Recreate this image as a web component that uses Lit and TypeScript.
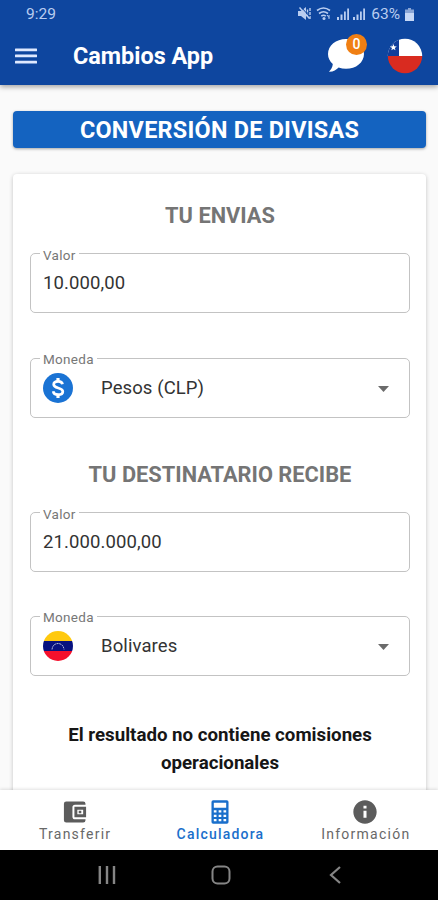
import { LitElement, html, css, svg } from "lit";
import { customElement, property } from "lit/decorators.js";
import { classMap } from "lit/directives/class-map.js";

const flagChile = html`<svg width="36" height="36" viewBox="0 0 36 36">
  <clipPath id="c"><circle cx="18" cy="18" r="17.2" /></clipPath>
  <g clip-path="url(#c)">
    <rect width="36" height="18" fill="#fff" />
    <rect width="12" height="18" fill="#103d9b" />
    <rect y="18" width="36" height="18" fill="#d92b20" />
  </g>
  <path fill="#fff" d="M6.400 6l.9 2.300 2.500.1-2 1.500.7 2.400-2.100-1.300-2.100 1.300.7-2.400-2-1.500 2.500-.1z" />
</svg>`;

const flagVenezuela = html`<svg width="30" height="30" viewBox="0 0 30 30">
  <clipPath id="v"><circle cx="15" cy="15" r="15" /></clipPath>
  <g clip-path="url(#v)">
    <rect width="30" height="10" fill="#ffc90e" />
    <rect y="10" width="30" height="10" fill="#07127f" />
    <rect y="20" width="30" height="10" fill="#f5102c" />
  </g>
  <path d="M9 18.500c.3-3.800 2.800-6 6-6s5.700 2.200 6 6" fill="none" stroke="#aab2d8" stroke-width="1" stroke-dasharray="2 .6" />
</svg>`;

const dollar = html`<svg width="30" height="30" viewBox="0 0 30 30">
  <circle cx="15" cy="15" r="15" fill="#1a73d4" />
  <path fill="none" stroke="#fff" stroke-width="2.700" d="M19.500 11.300c-.3-1.900-1.900-3-4.400-3-2.600 0-4.400 1.200-4.400 3.200 0 4.400 9.100 2.500 9.100 7 0 2-1.900 3.200-4.600 3.200-2.800 0-4.700-1.200-5-3.400" />
  <path fill="#fff" d="M13.400 5h3.200v3.300h-3.200zM13.400 21.600h3.200v3.300h-3.200z" />
</svg>`;

const navPaths = {
  wallet: svg`<path fill-rule="evenodd" d="M21 18.200V19a2 2 0 0 1-2 2H4.500a2 2 0 0 1-2-2V5a2 2 0 0 1 2-2H19a2 2 0 0 1 2 2v.8h-9a2.200 2.200 0 0 0-2.200 2.200v8a2.200 2.200 0 0 0 2.200 2.200zM11.500 16.500h10v-9h-10zM14 14V10h5v4zM15.200 11h2.200v2.100h-2.200z" />`,
  calculator: svg`<path fill-rule="evenodd" d="M6.200 2h11.600a1.500 1.500 0 0 1 1.500 1.500v17a1.500 1.500 0 0 1-1.500 1.500H6.200a1.500 1.500 0 0 1-1.500-1.500v-17A1.500 1.500 0 0 1 6.200 2zM6.700 4v4.300h10.600V4zM6.700 10.500v2h2.300v-2zm4.150 0v2h2.300v-2zm4.150 0v2h2.300v-2zM6.700 14.300v2h2.300v-2zm4.150 0v2h2.300v-2zm4.150 0v2h2.300v-2zM6.700 18v2h2.300v-2zm4.150 0v2h2.300v-2zm4.150 0v2h2.300v-2z" />`,
  info: svg`<path d="M12 2C6.480 2 2 6.480 2 12s4.480 10 10 10 10-4.480 10-10S17.520 2 12 2zm1.300 15h-2.600v-6h2.600v6zm0-8h-2.600V6.600h2.600V9z" />`,
};

@customElement("outlined-field")
export class OutlinedField extends LitElement {
  @property() label = "";
  @property() value = "";
  @property() currency = "";

  static styles = css`
    :host { display: block; }
    .box {
      position: relative;
      box-sizing: border-box;
      height: 60px;
      border: 1px solid #c3c3c3;
      border-radius: 5px;
      display: flex;
      align-items: center;
      padding: 0 20px 0 12px;
      font-size: 18.5px;
      letter-spacing: 0.1px;
      color: #333;
    }
    .label {
      position: absolute;
      left: 9px;
      top: -7px;
      padding: 0 3px;
      background: #fff;
      font-size: 13.5px;
      line-height: 16px;
      letter-spacing: 0.3px;
      color: #777;
    }
    .select .label { top: -8px; }
    .icon { display: flex; width: 58px; }
    .value { flex: 1; }
    .arrow { display: block; margin-top: 2px; }
  `;

  render() {
    const icon = this.currency === "clp" ? dollar : flagVenezuela;
    return html`<div class=${classMap({ box: true, select: !!this.currency })}>
      <span class="label">${this.label}</span>
      ${this.currency ? html`<span class="icon">${icon}</span>` : null}
      <span class="value">${this.value}</span>
      ${this.currency
        ? html`<svg class="arrow" width="11" height="6" viewBox="0 0 11 6"><path fill="#6b6b6b" d="M0 0h11L5.500 6z" /></svg>`
        : null}
    </div>`;
  }
}

@customElement("app-root")
export class AppRoot extends LitElement {
  static styles = css`
    :host {
      display: flex;
      flex-direction: column;
      height: 900px;
      overflow: hidden;
      background: #fafafa;
      font-family: Roboto, "Liberation Sans", sans-serif;
    }
    svg { display: block; }
    header {
      position: relative;
      z-index: 1;
      flex: none;
      height: 85px;
      background: #0e469f;
      color: #fff;
      box-shadow: 0 2px 5px rgba(0, 0, 0, 0.35);
    }
    .status {
      display: flex;
      align-items: center;
      gap: 5px;
      height: 28px;
      padding: 0 24px 0 26px;
      font-size: 15.5px;
      color: #b9cdf0;
    }
    .clock { flex: 1; }
    .bar { display: flex; align-items: center; height: 56px; padding: 0 15px; }
    .title { flex: 1; margin-left: 36px; font-size: 23.4px; font-weight: 700; }
    .chat { position: relative; margin-right: 23px; }
    .badge {
      position: absolute;
      left: 18px;
      top: -5px;
      width: 21px;
      height: 21px;
      border-radius: 50%;
      background: #f07f13;
      font-size: 14px;
      font-weight: 500;
      line-height: 21px;
      text-align: center;
    }
    main { flex: 1; min-height: 0; overflow: hidden; padding: 26px 12px 0 13px; }
    .banner {
      height: 37px;
      line-height: 38px;
      border-radius: 4px;
      background: #1463c0;
      box-shadow: 0 1px 3px rgba(0, 0, 0, 0.35);
      color: #fff;
      font-size: 23.4px;
      font-weight: 700;
      letter-spacing: 0.25px;
      text-align: center;
    }
    .card {
      box-sizing: border-box;
      margin-top: 26px;
      height: 640px;
      padding: 0 16px 0 17px;
      border-radius: 4px;
      background: #fff;
      box-shadow: 0 1px 4px rgba(0, 0, 0, 0.22);
    }
    h2 { margin: 0; font-size: 21.8px; font-weight: 700; color: #757575; text-align: center; line-height: 26px; }
    .send { padding: 29px 0 24px; }
    .receive { padding: 44px 0 24px; }
    .next { margin-top: 45px; }
    .next.last { margin-top: 44px; }
    .note { margin: 45px 0 0; padding: 0 30px; font-size: 18.7px; line-height: 28px; font-weight: 700; color: #161616; text-align: center; }
    nav {
      position: relative;
      flex: none;
      display: flex;
      height: 60px;
      box-sizing: border-box;
      padding-left: 2px;
      background: #fff;
      box-shadow: 0 -1px 3px rgba(0, 0, 0, 0.12);
    }
    .tab {
      flex: 1;
      display: flex;
      flex-direction: column;
      align-items: center;
      padding-top: 8px;
      color: #686868;
      font-size: 14px;
      line-height: 16px;
      letter-spacing: 1.25px;
    }
    .tab span { margin-right: -1px; }
    .tab svg { fill: #5c5c5c; }
    .active { color: #1a6fcb; font-weight: 500; letter-spacing: 1.2px; }
    .active svg { fill: #1a6fcb; }
    .system { flex: none; display: flex; justify-content: center; height: 50px; padding-left: 4px; background: #000; }
    .key { flex: 0 0 114px; display: flex; justify-content: center; align-items: center; }
  `;

  private tab(icon: keyof typeof navPaths, label: string, active = false) {
    return html`<div class=${classMap({ tab: true, active })}>
      <svg width="28" height="28" viewBox="0 0 24 24">${navPaths[icon]}</svg>
      <span>${label}</span>
    </div>`;
  }

  render() {
    return html`
      <header>
        <div class="status">
          <span class="clock">9:29</span>
          <svg width="68" height="16" viewBox="0 0 68 16" fill="#b9cdf0">
            <path d="M0 5h3l5-4v13l-5-4H0z" />
            <path d="M9.500 3.500v8M12 2v11.500" stroke="#b9cdf0" stroke-width="1.400" stroke-dasharray="3 1" fill="none" />
            <path d="M1.500 1.500l10 11" stroke="#b9cdf0" stroke-width="1.500" />
            <path d="M2.600 0.500l9 10" stroke="#0e469f" stroke-width="1" />
            <g fill="none" stroke="#b9cdf0" stroke-width="1.600">
              <path d="M19 4.500q6.500-5 13 0M21 7.500q4.500-3.500 9 0M23.300 10.200q2.200-1.800 4.500 0" />
            </g>
            <circle cx="26" cy="12.500" r="1.500" />
            <path d="M29 9l2 2.500M31 9v4" stroke="#b9cdf0" stroke-width="1" />
            <path d="M39 11h2v3h-2zM42.500 8.500h2V14h-2zM46 5.500h1.800V14H46zM49.200 2.500H51V14h-1.800zM55 11h2v3h-2zM58.500 8.500h2V14h-2zM62 5.500h1.800V14H62zM65.200 2.500H67V14h-1.800z" />
          </svg>
          <span>63%</span>
          <svg width="9" height="13" viewBox="0 0 9 13">
            <path fill="#89a5d6" d="M3 0h3v1.500h3V5H0V1.500h3z" /><path fill="#c6d8f6" d="M0 5h9v8H0z" />
          </svg>
        </div>
        <div class="bar">
          <svg width="22" height="16" viewBox="0 0 22 16" fill="#dfe9ff">
            <rect y="0.500" width="22" height="2.700" rx=".5" /><rect y="6.600" width="22" height="2.700" rx=".5" /><rect y="12.700" width="22" height="2.700" rx=".5" />
          </svg>
          <span class="title">Cambios App</span>
          <div class="chat">
            <svg width="36" height="34" viewBox="0 0 36 34">
              <path fill="#fff" d="M18 0C8 0 0 6.500 0 15c0 4.200 1.900 7.300 4.800 10C4.600 28 3 30.500 1 32.800c4 .2 7.500-1.800 9.600-4.200 2.300.8 4.800 1.200 7.400 1.200 10 0 18-6.500 18-14.900S28 0 18 0z" />
            </svg>
            <span class="badge">0</span>
          </div>
          ${flagChile}
        </div>
      </header>
      <main>
        <div class="banner">CONVERSIÓN DE DIVISAS</div>
        <section class="card">
          <h2 class="send">TU ENVIAS</h2>
          <outlined-field label="Valor" value="10.000,00"></outlined-field>
          <outlined-field class="next" label="Moneda" value="Pesos (CLP)" currency="clp"></outlined-field>
          <h2 class="receive">TU DESTINATARIO RECIBE</h2>
          <outlined-field label="Valor" value="21.000.000,00"></outlined-field>
          <outlined-field class="next last" label="Moneda" value="Bolivares" currency="ves"></outlined-field>
          <p class="note">El resultado no contiene comisiones operacionales</p>
        </section>
      </main>
      <nav>
        ${this.tab("wallet", "Transferir")} ${this.tab("calculator", "Calculadora", true)} ${this.tab("info", "Información")}
      </nav>
      <div class="system">
        <div class="key">
          <svg width="18" height="18" viewBox="0 0 18 18" stroke="#858585" stroke-width="2.400"><path d="M1.800 0v18M9 0v18M16 0v18" /></svg>
        </div>
        <div class="key">
          <svg width="20" height="20" viewBox="0 0 20 20" fill="none" stroke="#858585" stroke-width="2"><rect x="1.500" y="1.500" width="17" height="17" rx="5" /></svg>
        </div>
        <div class="key">
          <svg width="12" height="18" viewBox="0 0 12 18" fill="none" stroke="#858585" stroke-width="2.200"><path d="M11 1L2 9l9 8" /></svg>
        </div>
      </div>
    `;
  }
}
